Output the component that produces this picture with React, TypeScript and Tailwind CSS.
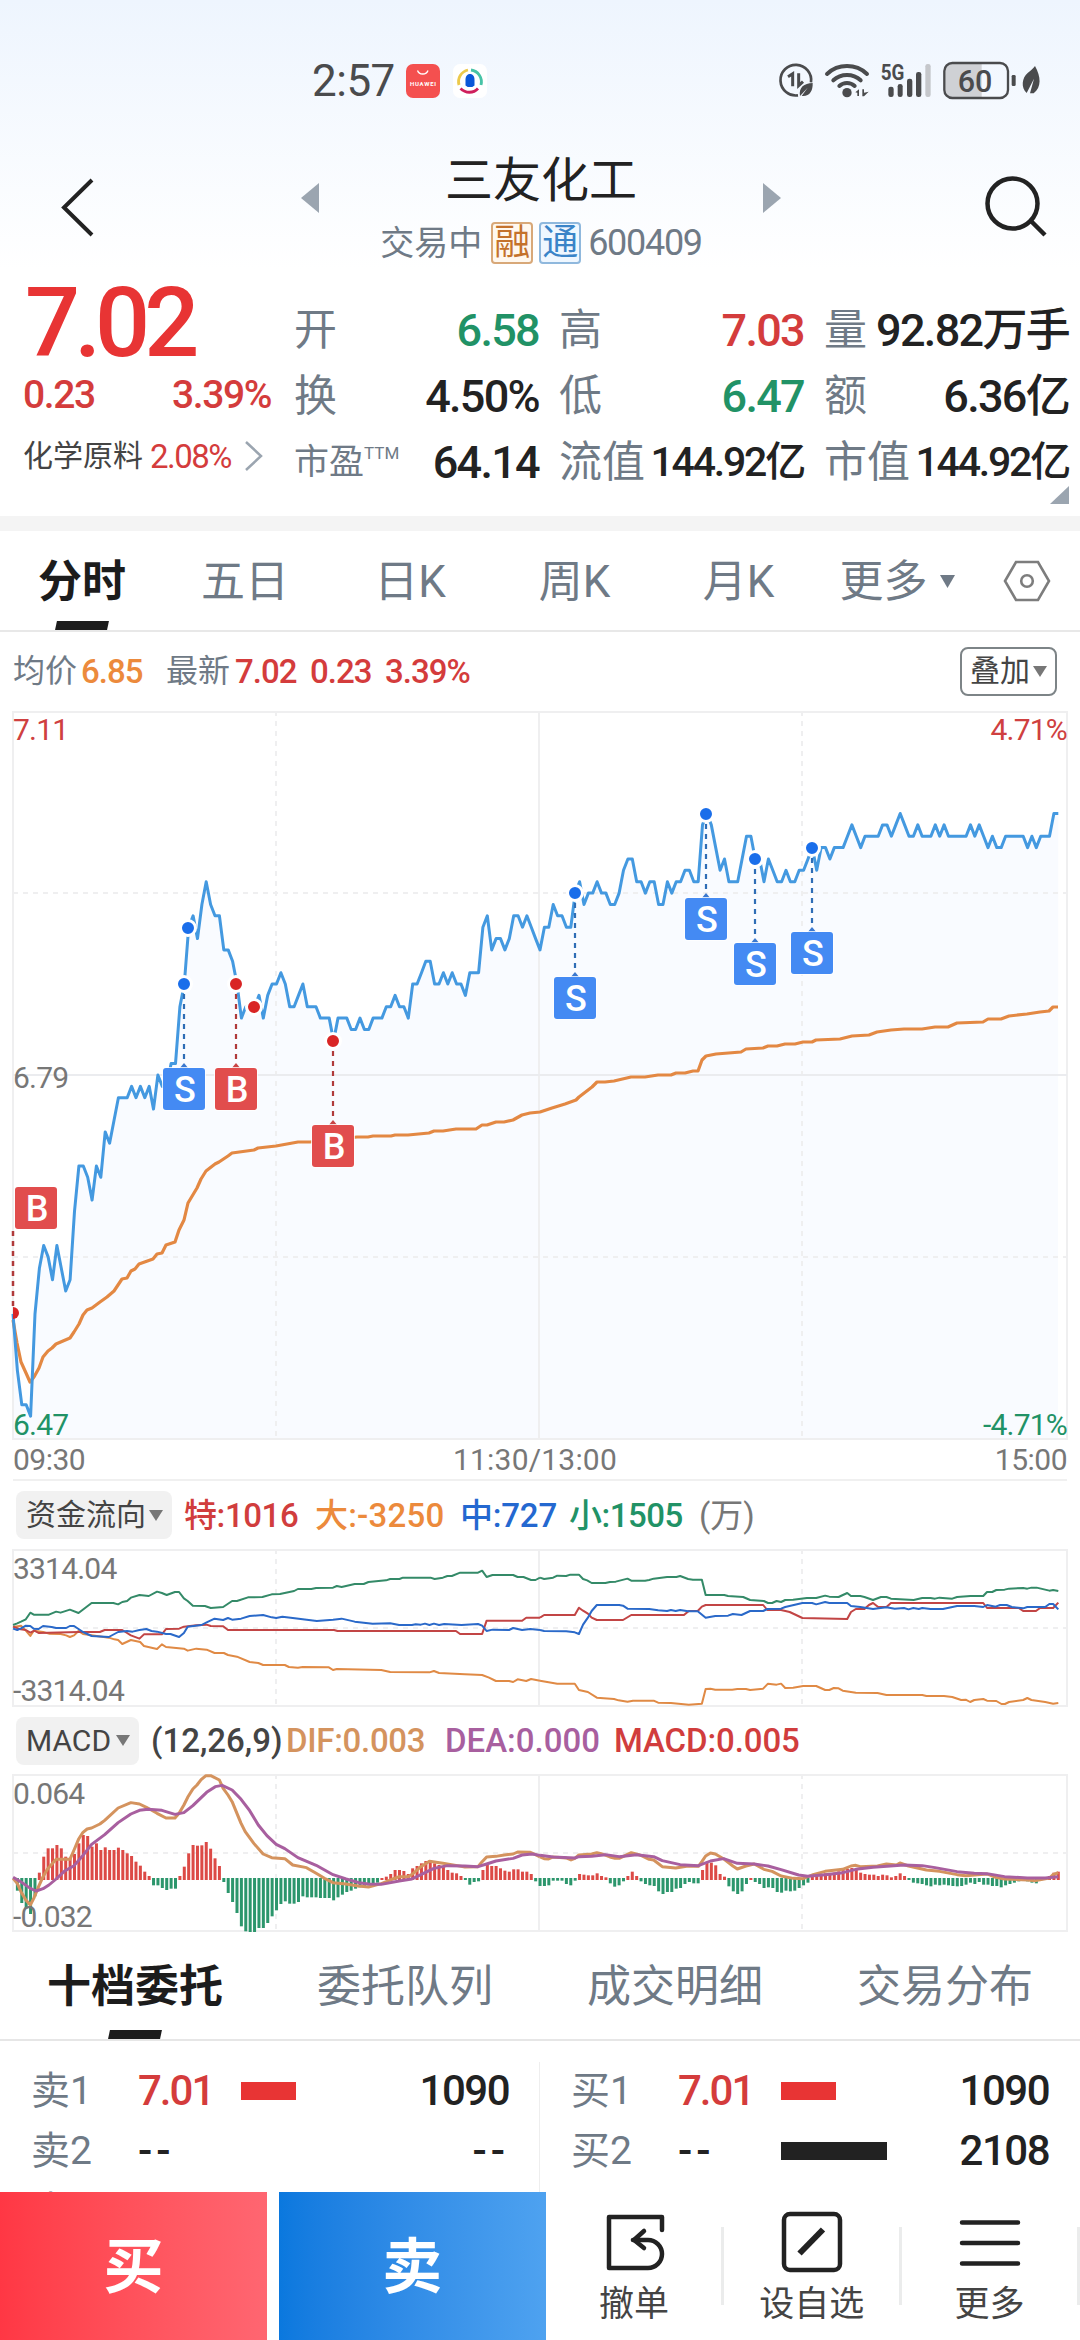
import type { ReactNode } from 'react'

// one price (in fen) per minute, 09:30 first
const prices = [
  658, 653, 650, 650, 649, 658, 662, 664, 663, 661, 664, 662, 660, 661, 667, 671, 671, 670, 668, 671,
  670, 674, 673, 675, 677, 677, 677, 678, 677, 678, 677, 678, 676, 679, 678, 678, 680, 680, 685, 687,
  692, 693, 691, 694, 696, 694, 693, 693, 690, 690, 689, 687, 684, 685, 685, 685, 686, 684, 686, 687,
  687, 688, 687, 685, 685, 686, 687, 685, 685, 685, 684, 684, 684, 682, 684, 684, 684, 683, 683, 684,
  683, 683, 684, 684, 684, 685, 685, 686, 685, 685, 684, 687, 687, 688, 689, 689, 687, 687, 688, 687,
  688, 687, 687, 686, 688, 688, 688, 692, 693, 690, 691, 691, 690, 691, 693, 693, 692, 693, 692, 691,
  690, 692, 692, 694, 693, 693, 692, 692, 695, 696, 694, 695, 695, 696, 695, 695, 694, 694, 695, 697,
  698, 698, 696, 696, 695, 696, 696, 694, 694, 696, 695, 696, 696, 697, 697, 696, 696, 701, 702, 701,
  699, 697, 698, 696, 696, 696, 698, 700, 700, 698, 698, 696, 698, 697, 696, 696, 697, 696, 696, 697,
  697, 698, 699, 697, 699, 699, 698, 699, 699, 699, 700, 701, 700, 699, 700, 700, 700, 700, 701, 701,
  700, 701, 702, 701, 700, 700, 701, 700, 700, 700, 701, 700, 701, 700, 700, 700, 700, 700, 701, 700,
  701, 700, 699, 700, 699, 699, 700, 700, 700, 700, 700, 699, 700, 699, 700, 700, 700, 702, 702,
]

const avgLine =
  '13,609 17,632 21,651 26,662 30,671 34,666 39,657 43,646 48,640 52,637 56,633 70,627 74,621 79,613 83,604 87,599 92,597 100,591 107,586 114,580 122,568 127,567 131,560 135,558 139,553 153,548 157,543 162,542 166,534 175,531 179,519 184,509 188,492 197,477 201,468 206,460 215,453 219,451 228,445 232,442 254,439 258,437 276,435 298,431 310,431 357,426 368,426 373,425 391,425 395,424 408,424 429,422 434,420 443,420 456,418 476,418 482,414 487,414 496,411 504,411 513,409 522,404 530,402 540,401 552,397 565,393 576,389 579,386 592,376 597,371 605,371 614,370 631,366 645,366 658,364 671,364 676,362 685,362 693,360 698,360 702,349 706,345 716,343 741,341 746,338 763,337 768,335 777,335 785,333 795,333 803,331 812,331 816,329 840,328 852,325 869,324 877,321 891,319 904,318 922,318 935,316 948,316 957,312 983,311 988,308 1001,308 1009,305 1027,303 1040,301 1049,300 1053,296 1058,296'

const trades = [
  { x: 184, y: 273, side: 'S', tag: true },
  { x: 188, y: 217, side: 'S', tag: false },
  { x: 236, y: 273, side: 'B', tag: true },
  { x: 254, y: 296, side: 'B', tag: false },
  { x: 333, y: 330, side: 'B', tag: true },
  { x: 575, y: 182, side: 'S', tag: true },
  { x: 706, y: 103, side: 'S', tag: true },
  { x: 755, y: 148, side: 'S', tag: true },
  { x: 812, y: 137, side: 'S', tag: true },
]

type Line = { color: string; width: number; am: string; pm: string }

const flowLines: Line[] = [
  {
    color: '#e08a45',
    width: 2,
    am: '38,441 61,437 75,452 88,468 98,452 125,456 142,461 176,462 192,466 203,471 215,466 228,453 241,462 266,466 316,473 332,478 343,480 355,492 380,480 407,486 418,498 456,507 470,493 482,501 534,506 545,512 570,506 600,509 623,519 650,519 662,525 688,530 725,546 750,549 764,555 827,555 839,561 865,563 879,561 955,562 967,570 978,567 1107,570 1133,576 1247,577 1260,573 1275,579 1350,583 1400,585 1420,593 1440,603 1478,603 1490,606 1503,598 1528,603 1542,597 1568,602',
    pm: '0,602 50,611 101,611 113,630 139,636 165,653 215,657 228,661 254,665 270,662 330,662 343,668 380,669 432,674 470,671 481,627 495,626 509,629 558,629 573,627 598,627 610,630 648,626 662,611 687,614 700,611 712,624 735,623 764,618 802,618 828,630 840,630 853,624 867,625 879,632 917,638 980,639 1006,645 1110,645 1122,648 1173,648 1197,651 1223,660 1236,659 1249,666 1261,660 1287,657 1298,662 1325,663 1340,672 1350,672 1362,666 1403,660 1415,654 1427,660 1467,666 1490,671 1505,669',
  },
  {
    color: '#348a68',
    width: 2,
    am: '38,435 50,430 61,425 75,418 88,398 98,404 142,404 163,395 176,398 203,389 228,399 266,369 329,369 343,373 355,366 369,363 380,353 405,345 432,348 456,335 470,339 484,345 508,336 520,336 534,355 545,363 560,377 595,378 612,384 648,381 674,363 688,363 720,352 762,351 789,343 813,342 854,333 865,327 904,327 918,324 967,323 978,318 992,321 1030,312 1056,312 1070,306 1121,301 1133,297 1160,297 1170,293 1250,293 1262,297 1286,293 1299,288 1312,288 1336,278 1388,278 1400,272 1413,291 1430,285 1490,285 1503,291 1520,291 1542,300 1555,300 1568,293',
    pm: '0,293 12,297 38,293 50,287 76,288 88,284 113,284 125,297 137,301 150,309 190,309 203,306 220,305 254,296 265,302 305,302 317,300 330,296 369,291 396,291 407,288 430,297 444,299 470,299 481,345 535,345 546,348 590,351 610,360 650,363 662,369 674,369 687,363 700,366 712,360 735,359 775,354 802,354 828,347 840,350 867,351 892,339 903,348 930,348 942,351 967,360 990,351 1006,351 1019,356 1085,360 1110,354 1134,354 1147,356 1160,353 1197,356 1211,351 1250,348 1287,348 1298,336 1313,336 1325,330 1349,329 1362,326 1403,324 1415,326 1427,323 1442,323 1479,332 1490,330 1505,333',
  },
  {
    color: '#c24545',
    width: 2,
    am: '38,440 60,448 75,450 88,458 100,452 112,459 228,456 290,456 304,450 355,450 369,459 380,466 405,476 418,463 470,463 482,447 520,446 534,440 570,436 600,434 612,438 648,439 662,450 970,450 980,453 1324,453 1336,462 1400,462 1413,422 1516,422 1528,413 1568,413',
    pm: '0,413 12,405 101,405 113,383 125,392 139,401 150,413 165,420 241,420 265,405 418,405 432,393 458,393 470,380 481,375 648,375 660,390 700,390 725,396 762,414 892,417 903,396 917,387 942,387 955,375 967,369 982,381 1006,381 1019,369 1287,369 1298,384 1390,384 1403,393 1440,393 1452,384 1490,384 1505,368',
  },
  {
    color: '#2a69c9',
    width: 2,
    am: '38,446 50,450 61,445 75,437 88,438 98,446 112,447 125,438 150,441 163,444 192,444 203,438 215,438 241,456 266,468 316,471 343,456 369,453 385,455 405,450 425,447 440,453 456,455 482,462 495,462 520,471 534,459 545,440 585,435 600,427 623,416 648,420 662,414 674,419 700,416 725,408 764,405 789,412 802,414 820,410 850,414 879,418 920,423 967,419 992,416 1030,425 1082,431 1133,430 1159,435 1196,435 1207,433 1222,434 1234,431 1247,435 1260,431 1275,435 1290,432 1340,435 1388,432 1400,437 1413,453 1430,449 1478,450 1490,444 1516,450 1540,447 1568,450',
    pm: '0,450 12,453 76,454 101,457 113,462 125,434 139,413 150,393 165,375 230,375 241,377 254,386 317,387 343,391 369,393 380,390 394,393 407,390 430,394 458,394 481,413 509,408 546,407 560,402 585,405 610,393 648,393 660,387 700,386 712,381 762,369 790,369 802,373 828,366 840,369 892,369 903,378 930,381 967,387 1006,382 1030,386 1057,384 1070,388 1084,384 1100,387 1110,384 1134,387 1170,387 1211,378 1261,378 1287,381 1298,375 1323,380 1336,375 1355,375 1370,381 1403,385 1415,381 1467,381 1479,372 1490,372 1505,388',
  },
]

const macdLines: Line[] = [
  {
    color: '#d4935e',
    width: 3,
    am: '38,1195 50,1210 61,1235 75,1260 88,1275 98,1255 112,1220 125,1190 138,1167 163,1138 203,1138 215,1110 228,1078 241,1057 253,1047 266,1044 290,1032 304,1021 343,984 380,968 405,972 425,982 456,1000 482,1014 508,1014 520,1000 534,975 545,952 560,927 572,915 584,899 598,887 612,887 637,900 648,925 662,945 674,965 688,1000 700,1030 712,1055 737,1090 764,1122 789,1133 827,1136 850,1155 890,1163 918,1180 942,1195 967,1208 1005,1212 1040,1218 1070,1221 1107,1211 1133,1200 1159,1190 1186,1190 1200,1180 1222,1160 1247,1144 1286,1150 1324,1156 1350,1161 1388,1160 1400,1145 1413,1131 1440,1129 1464,1125 1490,1122 1503,1116 1540,1117 1555,1124 1568,1131',
    pm: '0,1131 12,1136 25,1137 38,1131 76,1134 90,1140 101,1135 113,1125 150,1122 165,1118 178,1121 203,1131 218,1135 230,1135 265,1118 290,1125 317,1138 330,1140 355,1160 394,1164 430,1158 460,1159 470,1145 481,1128 495,1119 509,1122 535,1138 560,1158 573,1167 598,1158 622,1152 650,1168 674,1174 700,1188 735,1195 764,1196 790,1185 828,1174 879,1168 903,1158 917,1156 930,1160 980,1158 1006,1152 1035,1155 1045,1149 1070,1158 1122,1170 1160,1174 1211,1184 1236,1187 1298,1182 1323,1192 1349,1197 1415,1200 1440,1202 1479,1194 1490,1184 1505,1178',
  },
  {
    color: '#a85f9f',
    width: 3,
    am: '38,1192 60,1205 88,1225 105,1233 125,1226 142,1215 163,1197 189,1172 215,1157 241,1126 266,1093 304,1064 343,1028 380,1002 405,991 430,988 470,991 508,1003 534,998 560,977 600,937 625,920 645,916 674,930 700,958 725,992 750,1035 775,1067 802,1093 827,1106 865,1133 918,1156 967,1184 1005,1197 1042,1208 1070,1212 1107,1213 1159,1203 1196,1197 1222,1184 1260,1165 1299,1157 1350,1158 1388,1160 1413,1152 1440,1143 1490,1135 1516,1125 1545,1122 1568,1126',
    pm: '0,1126 38,1131 101,1134 113,1130 150,1129 190,1124 230,1130 280,1124 330,1130 355,1142 407,1154 460,1157 495,1143 533,1136 573,1150 622,1152 662,1158 700,1169 751,1185 777,1189 828,1184 879,1178 917,1168 967,1162 1057,1155 1110,1157 1147,1163 1211,1175 1261,1180 1298,1181 1349,1190 1415,1194 1467,1194 1505,1190',
  },
]

const macdBars = [
  0, -38, -75, -92, -108, -55, 22, 70, 95, 95, 105, 95, 70, 65, 78, 110, 135, 132, 100, 110, 90, 98,
  90, 90, 97, 90, 80, 72, 55, 43, 25, 12, -22, -22, -30, -36, -32, -32, 12, 40, 80, 105, 103, 104,
  114, 94, 65, 42, -12, -45, -72, -105, -145, -160, -162, -162, -150, -150, -135, -115, -97, -78,
  -70, -77, -77, -72, -55, -58, -58, -58, -60, -60, -60, -67, -58, -50, -42, -38, -32, -28, -25, -22,
  -18, -14, 6, 10, 18, 30, 30, 27, 18, 35, 42, 50, 57, 60, 50, 45, 40, 30, 22, 20, 12, -6, -20, -12,
  -10, 30, 45, 42, 42, 35, 28, 25, 32, 32, 25, 25, 18, -10, -24, -24, -22, -8, -8, -8, -18, -22, -8,
  18, 16, 14, 14, 20, 12, 8, -16, -26, -22, -10, 12, 25, 12, -10, -18, -22, -24, -40, -48, -42, -42,
  -32, -30, -18, -12, -16, -16, 30, 52, 52, 44, 18, 10, -25, -40, -48, -40, -18, 6, -12, -18, -30,
  -28, -30, -42, -44, -38, -40, -38, -30, -22, -14, 14, 12, 16, 20, 18, 22, 26, 30, 34, 36, 30, 22,
  18, 16, 16, 12, 16, 14, 8, 12, 20, 12, -6, -14, -16, -18, -22, -25, -20, -22, -20, -22, -24, -25,
  -24, -20, -14, -18, -12, -20, -20, -24, -24, -28, -22, -18, -14, -10, -8, -10, -14, -16, -8, 4, 12,
  22, 25,
]

const minuteX = (i: number) => 13 + i * 4.392
const priceY = (p: number) => 364 + (679 - p) * 11.37

function StatusBar() {
  return (
    <div className="flex h-[110px] items-end pl-[312px]">
      <div className="flex h-[58px] items-center pb-px">
        <span className="w-[94px] text-[44px] leading-none tracking-[-0.5px] text-[#4a4b4d]">2:57</span>
        <svg width="34" height="34" viewBox="0 0 34 34">
          <rect width="34" height="34" rx="7" fill="#f4504f" />
          <path d="M11.500 6.500a5.500 5 0 0 0 10.500 0" fill="none" stroke="#fff" strokeWidth="1.300" />
          <text x="17" y="21.500" textAnchor="middle" fontSize="6" fontWeight="700" fill="#fff" textLength="26">
            HUAWEI
          </text>
        </svg>
        <svg className="ml-[13px]" width="34" height="34" viewBox="0 0 34 34">
          <rect width="34" height="34" rx="7" fill="#fff" />
          <g fill="none" strokeWidth="2.800">
            <path d="M6 21A12 12 0 0 1 15 6" stroke="#ecc94b" />
            <path d="M18 6a12 12 0 0 1 10 15" stroke="#47c3a6" />
            <path d="M7.500 24.500c5 5 13 5 17.500 0" stroke="#cf1f5c" />
          </g>
          <path d="M17 10c3 0 4.500 2.500 4.500 5.500v6l-2.200 1.500h-4.600l-2.200-1.500v-6c0-3 1.500-5.500 4.500-5.500z" fill="#0b57d8" />
        </svg>
      </div>
      <svg className="ml-[283px]" width="280" height="60" viewBox="0 0 840 180" fill="#4a4b4d">
        <g fill="none" stroke="#4a4b4d" strokeWidth="8">
          <path d="M84 136A46 46 0 1 1 123 97" />
          <path d="M54 80l14-9v38M86 70v37l13-12" strokeWidth="9" />
        </g>
        <path d="M90 138c-4-26 12-38 38-39 1 24-10 42-33 39l18-25z" />
        <g fill="none" stroke="#4a4b4d" strokeWidth="12" strokeLinecap="round">
          <path d="M171 72a88 88 0 0 1 120 0" />
          <path d="M190 91a60 60 0 0 1 82 0" />
          <path d="M208 108a34 34 0 0 1 46 0" />
        </g>
        <circle cx="231" cy="128" r="14" />
        <path d="M256 127l11-9v20h-5v-10zM277 118h5v10l14-3-14 14h-5z" />
        <text x="332" y="91" fontSize="66" fontWeight="700" textLength="71" lengthAdjust="spacingAndGlyphs">
          5G
        </text>
        <rect x="355" y="110" width="16" height="31" rx="7" />
        <rect x="383" y="102" width="15" height="39" rx="7" />
        <rect x="411" y="86" width="16" height="55" rx="7" />
        <rect x="438" y="66" width="16" height="75" rx="7" />
        <rect x="466" y="42" width="16" height="99" rx="7" fill="#c5c7cb" />
        <path d="M546 42h89v100h-89q-20 0-20-20V62q0-20 20-20z" fill="#cfd1d5" />
        <rect x="523" y="39" width="191" height="105" rx="24" fill="none" stroke="#4a4b4d" strokeWidth="7" />
        <text x="563" y="126" fontSize="96" fontWeight="500" textLength="104" lengthAdjust="spacingAndGlyphs">
          60
        </text>
        <rect x="725" y="75" width="12" height="33" rx="4" />
        <path d="M795 48c18 32 20 64-4 82h-11l12-44-22 43c-18-16-14-46 3-60 9-8 17-13 22-21z" />
      </svg>
    </div>
  )
}

function Header() {
  return (
    <div className="flex h-[160px] items-start">
      <svg className="ml-[60px] mt-[66px]" width="36" height="62" viewBox="0 0 36 62" fill="none" stroke="#222" strokeWidth="4">
        <path d="M32 4L4 31.500 32 59" />
      </svg>
      <svg className="ml-[205px] mt-[72px]" width="18" height="32" viewBox="0 0 18 32" fill="#9ba5b0">
        <path d="M18 1v30L0 16z" />
      </svg>
      <div className="flex w-[444px] flex-col items-center pt-[46px]">
        <div className="text-[48px] leading-[50px] text-[#222]">三友化工</div>
        <div className="mt-[14px] flex h-[46px] items-center text-[34px] leading-none text-[#6f7a86]">
          <span>交易中</span>
          <span className="ml-[9px] flex h-[42px] w-[42px] items-center justify-center rounded-[4px] border-2 border-[#d8a878] bg-[#fff8ef] text-[36px] text-[#c4722c]">
            融
          </span>
          <span className="ml-[6px] flex h-[42px] w-[42px] items-center justify-center rounded-[4px] border-2 border-[#8fb8dd] bg-[#eff7ff] text-[36px] text-[#3a84c8]">
            通
          </span>
          <span className="ml-[7px] text-[36px] tracking-[-1.300px]">600409</span>
        </div>
      </div>
      <svg className="mt-[72px]" width="18" height="32" viewBox="0 0 18 32" fill="#9ba5b0">
        <path d="M0 1v30l18-15z" />
      </svg>
      <svg className="ml-[203px] mt-[65px]" width="66" height="62" viewBox="0 0 66 62" fill="none" stroke="#222" strokeWidth="4.500">
        <circle cx="28.500" cy="28.500" r="25" />
        <path d="M47 46l14 14" />
      </svg>
    </div>
  )
}

function Stat({ label, value, color = 'text-[#222]', small }: { label: ReactNode; value: string; color?: string; small?: boolean }) {
  return (
    <div className="flex h-[66px] w-[245px] items-center justify-between whitespace-nowrap">
      <span className="text-[43px] leading-none text-[#6f7a86]">{label}</span>
      <span className={`font-medium leading-none ${small ? 'text-[41px] tracking-[-2.200px]' : 'text-[45px] tracking-[-1.700px]'} ${color}`}>
        {value}
      </span>
    </div>
  )
}

function Quote() {
  return (
    <div className="relative flex h-[246px] pt-[27px]">
      <div className="w-[294px] pl-[23px]">
        <div className="-mt-[22px] h-[97px] pl-[2px] text-[97px] font-medium leading-[97px] tracking-[-6px] text-[#e83434]">7.02</div>
        <div className="mt-[7px] flex h-[32px] w-[248px] items-center justify-between text-[39px] font-medium leading-[32px] tracking-[-1.400px] text-[#d43c3c]">
          <span>0.23</span>
          <span>3.39%</span>
        </div>
        <div className="mt-[27px] flex h-[36px] items-center text-[30px] leading-none text-[#444]">
          <span>化学原料</span>
          <span className="ml-[7px] w-[94px] text-[33px] tracking-[-1.500px] text-[#d43c3c]">2.08%</span>
          <svg width="20" height="30" viewBox="0 0 20 30" fill="none" stroke="#9ba5b0" strokeWidth="2.500">
            <path d="M2 1l15 14L2 29" />
          </svg>
        </div>
      </div>
      <div className="grid grid-cols-[245px_245px_245px] content-start gap-x-[20px]">
        <Stat label="开" value="6.58" color="text-[#219266]" />
        <Stat label="高" value="7.03" color="text-[#d43c3c]" />
        <Stat label="量" value="92.82万手" />
        <Stat label="换" value="4.50%" />
        <Stat label="低" value="6.47" color="text-[#219266]" />
        <Stat label="额" value="6.36亿" />
        <Stat
          label={
            <span className="flex items-start text-[35px]">
              市盈<span className="text-[17px] leading-none">TTM</span>
            </span>
          }
          value="64.14"
        />
        <Stat label="流值" value="144.92亿" small />
        <Stat label="市值" value="144.92亿" small />
      </div>
      <svg className="absolute bottom-[12px] right-[11px]" width="19" height="18" viewBox="0 0 19 18" fill="#9ba5b0">
        <path d="M19 0v18H0z" />
      </svg>
    </div>
  )
}

function Caret({ className = '' }: { className?: string }) {
  return (
    <svg className={className} width="14" height="11" viewBox="0 0 14 11" fill="#777">
      <path d="M0 0h14L7 11z" />
    </svg>
  )
}

function PeriodTabs() {
  const tab = 'flex h-full items-center justify-center'
  return (
    <div className="flex h-[101px] border-b-2 border-[#e8e8e8] text-[44px] leading-none text-[#6f7a86]">
      <div className={`${tab} relative w-[164px] pt-[2px] font-bold text-[#1c1c1c]`}>
        分时
        <span className="absolute bottom-0 left-[56px] h-[9px] w-[52px] -skew-x-12 bg-[#1c1c1c]" />
      </div>
      <div className={`${tab} w-[162px] pt-[2px]`}>五日</div>
      <div className={`${tab} w-[168px] pt-[2px]`}>日K</div>
      <div className={`${tab} w-[161px] pt-[2px]`}>周K</div>
      <div className={`${tab} w-[167px] pt-[2px]`}>月K</div>
      <div className={`${tab} w-[150px] pt-[2px]`}>
        更多
        <svg className="ml-[12px]" width="15" height="13" viewBox="0 0 15 13" fill="#6f7a86">
          <path d="M0 0h15L7.500 13z" />
        </svg>
      </div>
      <div className={`${tab} w-[108px] pl-[2px]`}>
        <svg width="48" height="42" viewBox="0 0 48 42" fill="none" stroke="#7d7d7d" strokeWidth="2.600">
          <path d="M13 2h22l11 19-11 19H13L2 21z" />
          <circle cx="24" cy="21" r="5.800" />
        </svg>
      </div>
    </div>
  )
}

function PriceInfo() {
  return (
    <div className="flex h-[79px] items-center pb-px pl-[13px] text-[33px] leading-none text-[#d43c3c]">
      <span className="text-[32px] text-[#6f7a86]">均价</span>
      <span className="ml-[4px] w-[85px] font-medium tracking-[-1px] text-[#ec8a3c]">6.85</span>
      <span className="text-[32px] text-[#6f7a86]">最新</span>
      <span className="ml-[5px] w-[75px] font-medium tracking-[-1px]">7.02</span>
      <span className="w-[75px] font-medium tracking-[-1px]">0.23</span>
      <span className="font-medium tracking-[-1px]">3.39%</span>
      <div className="ml-auto mr-[23px] flex h-[49px] w-[97px] items-center justify-center gap-[3px] rounded-[8px] border-2 border-[#7d8487] text-[30px] text-[#444]">
        叠加
        <Caret />
      </div>
    </div>
  )
}

function Grid({ h, dashed }: { h: number; dashed: number[] }) {
  return (
    <g fill="none" stroke="#efeff0" strokeWidth="2">
      <path d={`M13 1H1067M13 ${h - 1}H1067M13 0V${h}M539 0V${h}M1067 0V${h}`} />
      <path d={`M276 0V${h}M802 0V${h}`} strokeDasharray="5 5" />
      {dashed.map(y => (
        <path key={y} d={`M13 ${y}H1067`} strokeDasharray="5 5" />
      ))}
    </g>
  )
}

function TradeTag({ x, y, side }: { x: number; y: number; side: string }) {
  return (
    <g>
      <rect x={x - 22} y={y - 1} width="44" height="44" rx="4" fill="#fff" opacity="0.8" />
      <rect x={x - 21} y={y} width="42" height="42" rx="3" fill={side === 'S' ? '#448af3' : '#e14d4d'} />
      <text x={x + 1} y={y + 34} textAnchor="middle" fontSize="36" fontWeight="500" fill="#fff">
        {side}
      </text>
    </g>
  )
}

function MinuteChart() {
  const line = prices.map((p, i) => `${minuteX(i).toFixed(1)},${priceY(p).toFixed(1)}`).join(' ')
  return (
    <svg className="block overflow-visible" width="1080" height="729" viewBox="0 0 1080 729">
      <polygon points={`13,728 ${line} 1058,728`} fill="#f9fbff" />
      <Grid h={729} dashed={[182, 546]} />
      <path d="M13 364H1067" stroke="#ebecef" strokeWidth="2" />
      <polyline points={avgLine} fill="none" stroke="#e38843" strokeWidth="3.200" strokeLinejoin="round" />
      <polyline points={line} fill="none" stroke="#4499e0" strokeWidth="3" strokeLinejoin="round" />
      <g fontSize="30" letterSpacing="-0.8">
        <text x="13" y="29" fill="#cf4040">7.11</text>
        <text x="1067" y="29" fill="#cf4040" textAnchor="end">4.71%</text>
        <text x="13" y="377" fill="#777">6.79</text>
        <text x="13" y="724" fill="#219266">6.47</text>
        <text x="1067" y="724" fill="#219266" textAnchor="end">-4.71%</text>
      </g>
      <path d="M13 520V600" stroke="#b03a3a" strokeWidth="2.500" strokeDasharray="5 5" />
      <path d="M13 596a6 6 0 0 1 0 12z" fill="#d92525" />
      <TradeTag x={36} y={476} side="B" />
      {trades.map(t => (
        <g key={`${t.x}-${t.y}`}>
          {t.tag && (
            <>
              <path d={`M${t.x} ${t.y + 10}V${t.y + 78}`} stroke={t.side === 'S' ? '#2f6db5' : '#b03a3a'} strokeWidth="2.200" strokeDasharray="5 5" />
              <path d={`M${t.x - 5} ${t.y + 85}l5 -6 5 6z`} fill={t.side === 'S' ? '#3b78cf' : '#c94444'} />
              <TradeTag x={t.x} y={t.y + 84} side={t.side} />
            </>
          )}
          <circle cx={t.x} cy={t.y} r="7.500" fill={t.side === 'S' ? '#1a6eea' : '#d92525'} stroke="#fff" strokeWidth="3" />
        </g>
      ))}
    </svg>
  )
}

// lines are stored per trading session on a 1568-unit wide half
function SessionLines({ lines, top }: { lines: Line[]; top: number }) {
  return (
    <g transform={`scale(0.34439 0.33333) translate(0 ${-top})`} fill="none" strokeLinejoin="round">
      {lines.map(l => (
        <g key={l.color} stroke={l.color} strokeWidth={l.width * 2.95}>
          <polyline points={l.am} />
          <polyline points={l.pm} transform="translate(1568 0)" />
        </g>
      ))}
    </g>
  )
}

function FlowChart() {
  return (
    <svg className="block overflow-visible" width="1080" height="158" viewBox="0 0 1080 158">
      <Grid h={158} dashed={[79]} />
      <SessionLines lines={flowLines} top={207} />
      <g fontSize="30" letterSpacing="-0.800" fill="#777">
        <text x="13" y="30">3314.04</text>
        <text x="13" y="152">-3314.04</text>
      </g>
    </svg>
  )
}

function MacdChart() {
  return (
    <svg className="block overflow-visible" width="1080" height="158" viewBox="0 0 1080 158">
      <Grid h={158} dashed={[79]} />
      {macdBars.map((v, i) => (
        <rect
          key={i}
          x={minuteX(i) - 1.5}
          y={v > 0 ? 106 - v / 3 : 104}
          width="3"
          height={Math.abs(v) / 3}
          fill={v > 0 ? '#dc4a46' : '#2c966c'}
        />
      ))}
      <SessionLines lines={macdLines} top={882} />
      <g fontSize="30" letterSpacing="-0.800" fill="#777">
        <text x="13" y="30">0.064</text>
        <text x="13" y="153">-0.032</text>
      </g>
    </svg>
  )
}

function Chip({ children }: { children: ReactNode }) {
  return (
    <div className="flex h-[48px] items-center justify-between rounded-[8px] bg-[#f1f1f1] pl-[10px] pr-[9px] text-[30px] text-[#444]">
      {children}
      <Caret />
    </div>
  )
}

function FlowHeader() {
  return (
    <div className="ml-[13px] mr-[13px] flex h-[70px] items-center whitespace-nowrap border-t-2 border-[#f0f0f0] pl-[3px] text-[33px] font-medium leading-none">
      <div className="w-[168px] font-normal">
        <div className="w-[156px]">
          <Chip>资金流向</Chip>
        </div>
      </div>
      <span className="w-[131px] tracking-[-0.400px] text-[#d13d3d]">特:1016</span>
      <span className="w-[145px] tracking-[0.200px] text-[#ec8a3c]">大:-3250</span>
      <span className="w-[109px] tracking-[-0.200px] text-[#2468d0]">中:727</span>
      <span className="w-[130px] tracking-[-0.500px] text-[#219266]">小:1505</span>
      <span className="text-[33px] font-normal text-[#777]">(万)</span>
    </div>
  )
}

function MacdHeader() {
  return (
    <div className="flex h-[67px] items-center whitespace-nowrap pl-[16px] text-[33px] leading-none">
      <div className="w-[135px]">
        <div className="w-[123px]">
          <Chip>MACD</Chip>
        </div>
      </div>
      <span className="w-[135px] font-medium text-[#444]">(12,26,9)</span>
      <span className="w-[159px] font-medium tracking-[-0.300px] text-[#d4935e]">DIF:0.003</span>
      <span className="w-[169px] font-medium text-[#a85f9f]">DEA:0.000</span>
      <span className="font-medium tracking-[-0.100px] text-[#d13d3d]">MACD:0.005</span>
    </div>
  )
}

function DetailTabs() {
  return (
    <div className="grid h-[109px] grid-cols-4 border-b-2 border-[#e6e6e6] text-[44px] leading-[111px] text-[#6f7a86]">
      <div className="relative h-[107px] text-center font-bold text-[#1c1c1c]">
        十档委托
        <span className="absolute bottom-0 left-[109px] h-[9px] w-[52px] -skew-x-12 bg-[#1c1c1c]" />
      </div>
      <div className="text-center">委托队列</div>
      <div className="text-center">成交明细</div>
      <div className="text-center">交易分布</div>
    </div>
  )
}

const asks = [
  { label: '卖1', price: '7.01', qty: '1090', bar: 55 },
  { label: '卖2', price: '--', qty: '--', bar: 0 },
  { label: '卖3', price: '--', qty: '--', bar: 0 },
]
const bids = [
  { label: '买1', price: '7.01', qty: '1090', bar: 55 },
  { label: '买2', price: '--', qty: '2108', bar: 106 },
]

function Book({ rows }: { rows: typeof asks }) {
  return (
    <div className="h-[151px] w-[540px] overflow-hidden pl-[31px] pr-[31px] pt-[20px]">
      {rows.map(r => (
        <div key={r.label} className="flex h-[60px] items-center text-[42px] leading-none text-[#222]">
          <span className="w-[107px] text-[39px] text-[#6f7a86]">{r.label}</span>
          <span className={`w-[103px] font-medium ${r.price === '--' ? 'tracking-[4px]' : 'tracking-[-2px] text-[#d43c3c]'}`}>{r.price}</span>
          <span className={`h-[18px] ${r.price === '--' ? 'bg-[#222]' : 'bg-[#e83434]'}`} style={{ width: r.bar }} />
          <span className={`ml-auto font-medium ${r.qty === '--' ? 'tracking-[4px]' : 'tracking-[-1.500px]'}`}>{r.qty}</span>
        </div>
      ))}
    </div>
  )
}

function Action({ label, children }: { label: string; children: ReactNode }) {
  return (
    <div className="flex h-full w-[178px] items-center">
      <div className="flex flex-1 flex-col items-center pt-[2px]">
        <svg width="64" height="64" viewBox="0 0 64 64" fill="none" stroke="#222" strokeWidth="4.500">
          {children}
        </svg>
        <span className="mt-[11px] text-[35px] leading-[40px] text-[#444]">{label}</span>
      </div>
      <span className="h-[78px] w-[3px] bg-[#ebecec]" />
    </div>
  )
}

function BottomBar() {
  return (
    <div className="flex h-[148px] bg-white">
      <div className="mr-[12px] flex w-[267px] items-center justify-center bg-linear-to-r from-[#ff3744] to-[#ff6671] pt-[3px] text-[60px] font-bold text-white">
        买
      </div>
      <div className="mr-px flex w-[267px] items-center justify-center bg-linear-to-r from-[#0a78de] to-[#4ea2f0] pt-[3px] text-[60px] font-bold text-white">
        卖
      </div>
      <Action label="撤单">
        <path d="M60 20V7H7v51h39a14 14 0 0 0 0-28H31" strokeLinejoin="round" strokeLinecap="round" />
        <path d="M42 21l-10 9 10 8" strokeLinecap="round" />
      </Action>
      <Action label="设自选">
        <rect x="4" y="4" width="56" height="56" rx="6" />
        <path d="M43 19.500L19.500 43.500" strokeWidth="6" />
      </Action>
      <Action label="更多">
        <path d="M4 12.500h56M4 33h56M4 53.500h56" strokeLinecap="round" />
      </Action>
    </div>
  )
}

export default function App() {
  return (
    <div className="flex h-[2340px] w-[1080px] flex-col overflow-hidden bg-white font-['Roboto','Noto_Sans_CJK_SC',sans-serif]">
      <div className="bg-linear-to-b from-[#eef5fe] to-white">
        <StatusBar />
        <Header />
      </div>
      <Quote />
      <div className="h-[15px] bg-[#f4f4f4]" />
      <PeriodTabs />
      <PriceInfo />
      <MinuteChart />
      <div className="flex h-[39px] items-center justify-between px-[13px] text-[30px] leading-none tracking-[-0.500px] text-[#777]">
        <span>09:30</span>
        <span className="-ml-[10px] tracking-[0.200px]">11:30/13:00</span>
        <span>15:00</span>
      </div>
      <FlowHeader />
      <FlowChart />
      <MacdHeader />
      <MacdChart />
      <DetailTabs />
      <div className="flex">
        <Book rows={asks} />
        <div className="-ml-px mt-[21px] w-px bg-[#eee]" />
        <Book rows={bids} />
      </div>
      <BottomBar />
    </div>
  )
}
